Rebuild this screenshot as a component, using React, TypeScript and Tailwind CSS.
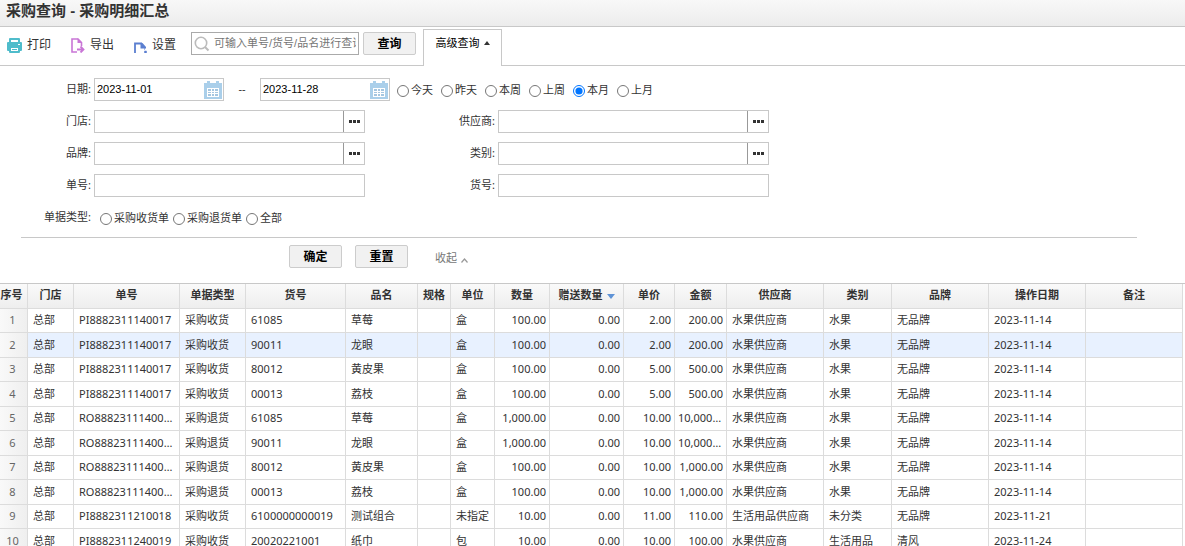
import clsx from 'clsx';
import { useState } from 'react';

type Column = {
  key: string;
  title: string;
  width?: number;
  align?: 'right';
  sorted?: boolean;
};

const columns: Column[] = [
  { key: 'store', title: '门店', width: 46 },
  { key: 'orderNo', title: '单号', width: 106 },
  { key: 'orderType', title: '单据类型', width: 66 },
  { key: 'itemNo', title: '货号', width: 100 },
  { key: 'name', title: '品名', width: 72 },
  { key: 'spec', title: '规格', width: 33 },
  { key: 'unit', title: '单位', width: 44 },
  { key: 'qty', title: '数量', width: 55, align: 'right' },
  { key: 'giftQty', title: '赠送数量', width: 74, align: 'right', sorted: true },
  { key: 'price', title: '单价', width: 51, align: 'right' },
  { key: 'amount', title: '金额', width: 52, align: 'right' },
  { key: 'supplier', title: '供应商', width: 97 },
  { key: 'category', title: '类别', width: 68 },
  { key: 'brand', title: '品牌', width: 97 },
  { key: 'date', title: '操作日期', width: 97 },
  { key: 'remark', title: '备注' }
];

const rows = [
  ['总部', 'PI8882311140017', '采购收货', '61085', '草莓', '', '盒', '100.00', '0.00', '2.00', '200.00', '水果供应商', '水果', '无品牌', '2023-11-14', ''],
  ['总部', 'PI8882311140017', '采购收货', '90011', '龙眼', '', '盒', '100.00', '0.00', '2.00', '200.00', '水果供应商', '水果', '无品牌', '2023-11-14', ''],
  ['总部', 'PI8882311140017', '采购收货', '80012', '黄皮果', '', '盒', '100.00', '0.00', '5.00', '500.00', '水果供应商', '水果', '无品牌', '2023-11-14', ''],
  ['总部', 'PI8882311140017', '采购收货', '00013', '荔枝', '', '盒', '100.00', '0.00', '5.00', '500.00', '水果供应商', '水果', '无品牌', '2023-11-14', ''],
  ['总部', 'RO8882311140017', '采购退货', '61085', '草莓', '', '盒', '1,000.00', '0.00', '10.00', '10,000.00', '水果供应商', '水果', '无品牌', '2023-11-14', ''],
  ['总部', 'RO8882311140017', '采购退货', '90011', '龙眼', '', '盒', '1,000.00', '0.00', '10.00', '10,000.00', '水果供应商', '水果', '无品牌', '2023-11-14', ''],
  ['总部', 'RO8882311140017', '采购退货', '80012', '黄皮果', '', '盒', '100.00', '0.00', '10.00', '1,000.00', '水果供应商', '水果', '无品牌', '2023-11-14', ''],
  ['总部', 'RO8882311140017', '采购退货', '00013', '荔枝', '', '盒', '100.00', '0.00', '10.00', '1,000.00', '水果供应商', '水果', '无品牌', '2023-11-14', ''],
  ['总部', 'PI8882311210018', '采购收货', '6100000000019', '测试组合', '', '未指定', '10.00', '0.00', '11.00', '110.00', '生活用品供应商', '未分类', '无品牌', '2023-11-21', ''],
  ['总部', 'PI8882311240019', '采购收货', '20020221001', '纸巾', '', '包', '10.00', '0.00', '10.00', '100.00', '水果供应商', '生活用品', '清风', '2023-11-24', '']
];

const dateRanges = ['今天', '昨天', '本周', '上周', '本月', '上月'];
const orderTypes = ['采购收货单', '采购退货单', '全部'];

function PrintIcon() {
  return (
    <svg width="15" height="15" viewBox="0 0 15 15" aria-hidden="true">
      <path d="M3 0h9a1 1 0 0 1 1 1v3h1a1 1 0 0 1 1 1v7a1 1 0 0 1-1 1h-1v1a1 1 0 0 1-1 1H3a1 1 0 0 1-1-1v-1H1a1 1 0 0 1-1-1V5a1 1 0 0 1 1-1h1V1a1 1 0 0 1 1-1z" fill="#4fbccb" />
      <path d="M4 2h7v2H4zM4 10h7v3H4zM11 6h2v1h-2z" fill="#fff" />
      <path d="M5 11h5v1H5z" fill="#4fbccb" />
    </svg>
  );
}

function ExportIcon() {
  return (
    <svg width="14" height="15" viewBox="0 0 14 15" fill="none" aria-hidden="true">
      <path d="M6 14H1V1h6l3.500 3.500V8" stroke="#c976d6" strokeWidth="1.600" />
      <path d="M6.500 0v5H11z" fill="#c976d6" />
      <path d="M6 11.500h6M9.500 8.500l3 3-3 3" stroke="#c976d6" strokeWidth="1.800" />
    </svg>
  );
}

function SettingIcon() {
  return (
    <svg className="mt-1" width="13" height="11" viewBox="0 0 13 11" fill="none" aria-hidden="true">
      <path d="M1 11V1.500h7" stroke="#5b7fd0" strokeWidth="1.800" />
      <path d="M6.500 1v5.500H12V5L8.500 1z" fill="#5b7fd0" />
      <path d="M10.500 6v2M10.500 9h2v2h-2z" stroke="#5b7fd0" fill="#5b7fd0" strokeWidth="0.500" />
    </svg>
  );
}

function SearchIcon() {
  return (
    <svg className="shrink-0" width="16" height="16" viewBox="0 0 16 16" fill="none" stroke="#bbb" aria-hidden="true">
      <circle cx="7" cy="7" r="5.700" strokeWidth="1.600" />
      <path d="M11 11l3.500 3.500" strokeWidth="2" />
    </svg>
  );
}

function CalendarIcon() {
  return (
    <svg width="18" height="18" viewBox="0 0 18 18" aria-hidden="true">
      <path d="M0 2h3V0h3v2h6V0h3v2h3v16H0z" fill="#aacfea" />
      <path d="M3 7h12v9H3z" fill="#fff" />
      <path d="M4 8h3v2H4zM8 8h2v2H8zM11 8h3v2h-3zM4 11h3v1H4zM8 11h2v1H8zM11 11h3v1h-3zM4 13h3v2H4zM8 13h2v2H8zM11 13h3v2h-3z" fill="#a5c6e0" />
    </svg>
  );
}

function ToolButton({ icon, label }: { icon: React.ReactNode; label: string }) {
  return (
    <button type="button" className="flex items-center gap-[5px] text-[12px] text-[#333]">
      {icon}
      {label}
    </button>
  );
}

function PushButton({ label }: { label: string }) {
  return (
    <button
      type="button"
      className="h-[23px] w-[53px] rounded-[2px] border border-[#ccc] bg-[#f1f1f1] text-[12px] leading-5 font-bold text-black"
    >
      {label}
    </button>
  );
}

function FieldLabel({ id, label, className }: { id?: string; label: string; className: string }) {
  return (
    <label htmlFor={id} className={clsx('mr-[3px] shrink-0 text-right leading-[22px]', className)}>
      {label}:
    </label>
  );
}

function DateField({ id, label, value }: { id: string; label: string; value: string }) {
  return (
    <div className="flex h-[23px] w-[130px] items-center border border-[#c8c8c8] bg-white pr-px">
      <input
        id={id}
        aria-label={label}
        defaultValue={value}
        className="min-w-0 flex-1 pl-0.5 font-['Liberation_Sans',sans-serif] text-[11px] text-black outline-none"
      />
      <button type="button" aria-label="选择日期">
        <CalendarIcon />
      </button>
    </div>
  );
}

function TextField({ id, picker }: { id: string; picker?: boolean }) {
  return (
    <div className="flex h-[23px] w-[271px] border border-[#c8c8c8] bg-white">
      <input id={id} className="min-w-0 flex-1 px-1 outline-none" />
      {picker && (
        <button
          type="button"
          aria-label="选择"
          className="flex w-[21px] items-center justify-center gap-px border-l border-[#999]"
        >
          <span className="size-[3px] bg-[#333]" />
          <span className="size-[3px] bg-[#333]" />
          <span className="size-[3px] bg-[#333]" />
        </button>
      )}
    </div>
  );
}

function RadioGroup({
  name,
  options,
  value,
  onChange,
  className
}: {
  name: string;
  options: string[];
  value: string;
  onChange: (value: string) => void;
  className?: string;
}) {
  return (
    <div className={clsx('flex h-6 items-center', className)}>
      {options.map((option) => (
        <label key={option} className="flex items-center gap-0.5 whitespace-nowrap">
          <input
            type="radio"
            name={name}
            checked={value === option}
            onChange={() => onChange(option)}
            className="mt-0.5 size-3"
          />
          {option}
        </label>
      ))}
    </div>
  );
}

function ResultTable() {
  const [selected, setSelected] = useState(1);

  return (
    <div className="min-h-0 flex-1 overflow-hidden border-t border-[#c8c8c8] pr-0.5">
      <table className="w-full table-fixed border-separate border-spacing-0 leading-4">
        <colgroup>
          <col style={{ width: 28 }} />
          {columns.map((column) => (
            <col key={column.key} style={{ width: column.width }} />
          ))}
        </colgroup>
        <thead>
          <tr className="h-[25px] bg-linear-to-b from-[#fafafa] to-[#ededed]">
            <th className="border-r border-b border-[#dcdcdc] p-0 pr-1 pb-0.5 font-bold whitespace-nowrap">
              序号
            </th>
            {columns.map((column) => (
              <th
                key={column.key}
                className="border-r border-b border-[#dcdcdc] p-0 pb-0.5 font-bold whitespace-nowrap"
              >
                {column.title}
                {column.sorted && (
                  <svg className="ml-1 inline-block" width="8" height="5" viewBox="0 0 8 5" aria-hidden="true">
                    <path d="M0 0h8L4 5z" fill="#5f93d6" />
                  </svg>
                )}
              </th>
            ))}
          </tr>
        </thead>
        <tbody>
          {rows.map((row, index) => (
            <tr
              key={index}
              onClick={() => setSelected(index)}
              className={clsx('h-6 even:h-[25px]', selected === index ? 'bg-[#e8f1ff]' : 'bg-white')}
            >
              <td className="border-r border-b border-[#dcdcdc] bg-linear-to-r from-[#f9f9f9] to-[#efefef] p-0 pr-0.5 pb-px text-center text-[#666]">
                {index + 1}
              </td>
              {columns.map((column, i) => (
                <td
                  key={column.key}
                  className={clsx(
                    'truncate border-r border-b border-[#dcdcdc] pt-0 pb-px',
                    column.align === 'right' ? 'pr-[3px] pl-[3px] text-right' : 'px-[5px]'
                  )}
                >
                  {row[i]}
                </td>
              ))}
            </tr>
          ))}
        </tbody>
      </table>
    </div>
  );
}

export default function App() {
  const [range, setRange] = useState('本月');
  const [orderType, setOrderType] = useState('');

  return (
    <div className="flex h-screen flex-col overflow-hidden bg-white font-['Noto_Sans','Noto_Sans_CJK_SC',sans-serif] text-[11px] text-[#333]">
      <header className="flex h-[27px] shrink-0 items-center border-b border-[#c8c8c8] bg-linear-to-b from-[#f8f8f8] to-[#ececec] px-1.5 pb-1">
        <h1 className="font-['Liberation_Sans','Noto_Sans_CJK_SC',sans-serif] text-[15px] leading-5 font-bold">
          采购查询 - 采购明细汇总
        </h1>
      </header>

      <div className="flex h-[39px] shrink-0 border-b border-[#c8c8c8] pl-[7px]">
        <div className="mr-[15px] flex items-center gap-5 pb-0.5">
          <ToolButton icon={<PrintIcon />} label="打印" />
          <ToolButton icon={<ExportIcon />} label="导出" />
          <ToolButton icon={<SettingIcon />} label="设置" />
        </div>
        <div className="mt-[5px] mr-1 flex h-[23px] w-[168px] items-center gap-1 border border-[#aaa] px-0.5">
          <SearchIcon />
          <input
            aria-label="查询条件"
            placeholder="可输入单号/货号/品名进行查询"
            className="min-w-0 flex-1 font-['Liberation_Sans','Noto_Sans_CJK_SC',sans-serif] outline-none placeholder:text-[#757575]"
          />
        </div>
        <div className="mt-[5px] mr-[7px]">
          <PushButton label="查询" />
        </div>
        <button
          type="button"
          className="mt-0.5 -mb-px flex w-[79px] items-center justify-center gap-1 border border-b-0 border-[#c8c8c8] bg-white pb-2.5 text-black"
        >
          高级查询
          <svg width="6" height="4" viewBox="0 0 6 4" aria-hidden="true">
            <path d="M3 0l3 4H0z" fill="#333" />
          </svg>
        </button>
      </div>

      <form className="shrink-0 pt-3" onSubmit={(e) => e.preventDefault()}>
        <div className="flex h-8">
          <FieldLabel id="date-from" label="日期" className="w-[91px]" />
          <DateField id="date-from" label="开始日期" value="2023-11-01" />
          <span className="w-9 text-center leading-[22px]">--</span>
          <DateField id="date-to" label="结束日期" value="2023-11-28" />
          <RadioGroup
            name="range"
            options={dateRanges}
            value={range}
            onChange={setRange}
            className="ml-[7px] gap-2"
          />
        </div>
        <div className="flex h-8">
          <FieldLabel id="store" label="门店" className="w-[91px]" />
          <TextField id="store" picker />
          <FieldLabel id="supplier" label="供应商" className="w-[130px]" />
          <TextField id="supplier" picker />
        </div>
        <div className="flex h-8">
          <FieldLabel id="brand" label="品牌" className="w-[91px]" />
          <TextField id="brand" picker />
          <FieldLabel id="category" label="类别" className="w-[130px]" />
          <TextField id="category" picker />
        </div>
        <div className="flex h-8">
          <FieldLabel id="order-no" label="单号" className="w-[91px]" />
          <TextField id="order-no" />
          <FieldLabel id="item-no" label="货号" className="w-[130px]" />
          <TextField id="item-no" />
        </div>
        <div className="flex h-[31px]">
          <FieldLabel label="单据类型" className="w-[91px]" />
          <RadioGroup
            name="order-type"
            options={orderTypes}
            value={orderType}
            onChange={setOrderType}
            className="ml-1.5 gap-1"
          />
        </div>
        <div className="mr-12 ml-[21px] border-t border-[#c8c8c8]" />
        <div className="flex pt-[7px] pb-[15px] pl-[289px]">
          <PushButton label="确定" />
          <span className="w-[13px]" />
          <PushButton label="重置" />
          <button type="button" className="ml-[27px] flex items-center gap-1 pt-1 text-[#777]">
            收起
            <svg className="mt-1" width="7" height="5" viewBox="0 0 7 5" fill="none" aria-hidden="true">
              <path d="M0.500 4.500l3-3.500 3 3.500" stroke="#999" strokeWidth="1.200" />
            </svg>
          </button>
        </div>
      </form>

      <ResultTable />
    </div>
  );
}
